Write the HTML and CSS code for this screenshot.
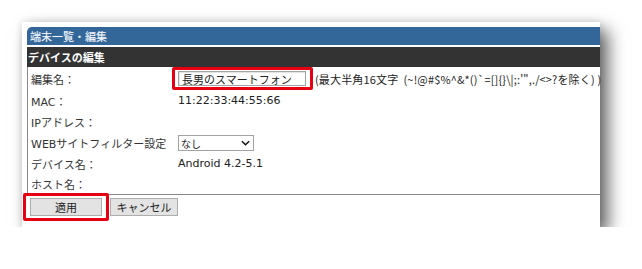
FILE: index.html
```html
<!DOCTYPE html>
<html lang="ja">

<head>
    <meta charset="UTF-8">
    <meta name="viewport" content="width=device-width, initial-scale=1.0">
    <title>デバイスの編集</title>
    <link rel="stylesheet" href="styles.css">
</head>

<body>
    <div class="panel">
        <div class="panel-title">端末一覧・編集</div>
        <div class="section-title">デバイスの編集</div>

        <div class="form">
            <div class="row row--first">
                <span class="label">編集名：</span>
                <span class="value">
                    <span class="mark mark--input"><input class="text-input" type="text" value="長男のスマートフォン"></span>
                    <span class="hint">(最大半角16文字&nbsp;&nbsp;(~!@#$%^&amp;*()`=[]{}\|;:'",./&lt;&gt;?を除く) )</span>
                </span>
            </div>
            <div class="row">
                <span class="label">MAC：</span>
                <span class="value">11:22:33:44:55:66</span>
            </div>
            <div class="row">
                <span class="label">IPアドレス：</span>
                <span class="value"></span>
            </div>
            <div class="row">
                <span class="label">WEBサイトフィルター設定</span>
                <span class="value">
                    <span class="select">
                        <select class="select-box">
                            <option>なし</option>
                        </select>
                        <svg class="select-icon" viewBox="0 0 10 6" fill="none" stroke="#111" stroke-width="1.6">
                            <path d="M1 1l4 4 4-4" />
                        </svg>
                    </span>
                </span>
            </div>
            <div class="row">
                <span class="label">デバイス名：</span>
                <span class="value">Android 4.2-5.1</span>
            </div>
            <div class="row row--last">
                <span class="label">ホスト名：</span>
                <span class="value"></span>
            </div>
        </div>

        <div class="actions">
            <span class="mark mark--btn"><button class="btn btn--apply">適用</button></span>
            <button class="btn btn--cancel">キャンセル</button>
        </div>
    </div>
</body>

</html>
```

FILE: styles.css
```css
/*
BLUE: #336699
DARK: #333333
MARK: #e60012
*/

* {
    margin: 0;
    padding: 0;
    box-sizing: border-box;
}

body {
    background-color: #fff;
    font-family: "DejaVu Sans", "Noto Sans CJK JP", sans-serif;
    font-size: 11px;
    color: #222;
}

.panel {
    width: 578px;
    margin: 22px 0 0 22px;
    padding: 5px 0 6px 5px;
    background-color: #fff;
    box-shadow: 8px 8px 16px rgba(0, 0, 0, .6), 0 0 8px rgba(0, 0, 0, .12);
}

.panel-title {
    height: 18px;
    padding-left: 3px;
    display: flex;
    align-items: center;
    background-color: #336699;
    border-top-left-radius: 5px;
    color: #f2f6fb;
    font-family: "Noto Sans CJK JP", sans-serif;
    text-shadow: 0 0 1px rgba(255, 255, 255, .4);
}

.section-title {
    height: 20px;
    margin-top: 2px;
    padding-left: 1px;
    display: flex;
    align-items: center;
    background-color: #333;
    color: #fff;
    font-family: "Noto Sans CJK JP", sans-serif;
    font-weight: 700;
}

.form {
    border-left: 1px solid #8a8a8a;
    border-bottom: 1px solid #8a8a8a;
}

.row {
    height: 21px;
    display: flex;
    align-items: center;
}

.row--first {
    height: 23px;
}

.row--last {
    height: 20px;
}

.label {
    flex-shrink: 0;
    width: 150px;
    padding-left: 3px;
    color: #333;
    white-space: nowrap;
}

.value {
    display: flex;
    align-items: center;
    white-space: nowrap;
}

.mark {
    display: inline-block;
    flex-shrink: 0;
    border: 3px solid #e60012;
    border-radius: 2px;
}

.mark--input {
    margin-left: -6px;
    padding: 1px 4px 1px 3px;
}

.text-input {
    display: block;
    width: 128px;
    height: 15px;
    padding-left: 3px;
    border: 1px solid #a3a3a3;
    box-shadow: inset 1px 1px 1px rgba(0, 0, 0, .12);
    font-family: "Noto Sans CJK JP", sans-serif;
    font-size: 11px;
    color: #222;
}

.hint {
    margin-left: 2px;
    font-family: "Noto Sans CJK JP", sans-serif;
    font-size: 11px;
    letter-spacing: 0.15px;
}

.select {
    position: relative;
    display: inline-block;
}

.select-box {
    display: block;
    width: 76px;
    height: 16px;
    padding-left: 2px;
    border: 1px solid #a3a3a3;
    background-color: #fff;
    appearance: none;
    font-family: "Noto Sans CJK JP", sans-serif;
    font-size: 10px;
    color: #222;
}

.select-icon {
    position: absolute;
    right: 4px;
    top: 5px;
    width: 9px;
    height: 6px;
}

.actions {
    display: flex;
    align-items: flex-start;
    gap: 1px;
    margin: -2px 0 0 -4px;
}

.mark--btn {
    padding: 2px 4px;
}

.btn {
    height: 18px;
    border: 1px solid #adadad;
    background-color: #e3e3e3;
    font-family: "Noto Sans CJK JP", sans-serif;
    font-size: 11px;
    color: #222;
}

.btn--apply {
    display: block;
    width: 72px;
}

.btn--cancel {
    width: 68px;
    margin-top: 5px;
}
```
